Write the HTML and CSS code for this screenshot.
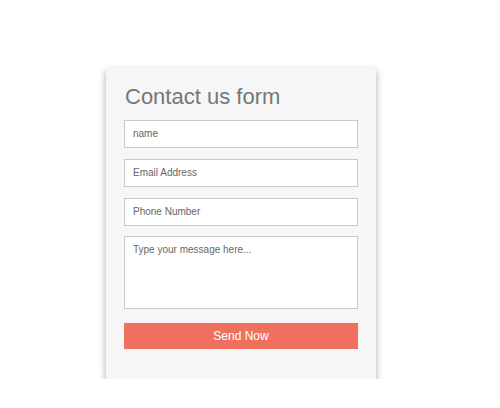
FILE: index.html
```html
<!DOCTYPE html>
<html>
<head>
<meta charset="utf-8">
<link rel="stylesheet" href="styles.css">
</head>
<body>
<div class="page">
  <form class="card">
    <h1 class="title">Contact us form</h1>
    <div class="field">name</div>
    <div class="field">Email Address</div>
    <div class="field">Phone Number</div>
    <div class="field area">Type your message here...</div>
    <div class="btn">Send Now</div>
  </form>
</div>
</body>
</html>
```
FILE: styles.css
```css
html, body { margin: 0; padding: 0; background: #fff; }
body { font-family: "Liberation Sans", Arial, sans-serif; }
.page { padding: 68px 0 0 106px; }
.card {
  width: 234px;
  padding: 15px 18px 30px 18px;
  background: #f6f6f6;
  box-shadow: 0 3px 7px rgba(0,0,0,0.35);
  display: flex;
  flex-direction: column;
  gap: 11px;
}
.title {
  margin: 0 0 -1px 1px;
  font-size: 22px;
  font-weight: normal;
  color: #777;
  line-height: 27px;
}
.field {
  height: 26px;
  border: 1px solid #c9c9c9;
  background: #fff;
  font-size: 10px;
  color: #666;
  padding: 0 8px;
  line-height: 26px;
}
.area {
  height: 65px;
  line-height: 14px;
  padding-top: 6px;
  margin-top: -1px;
}
.btn {
  height: 26px;
  margin-top: 3px;
  background: #f07060;
  color: #fff;
  font-size: 12px;
  line-height: 26px;
  text-align: center;
}
```
